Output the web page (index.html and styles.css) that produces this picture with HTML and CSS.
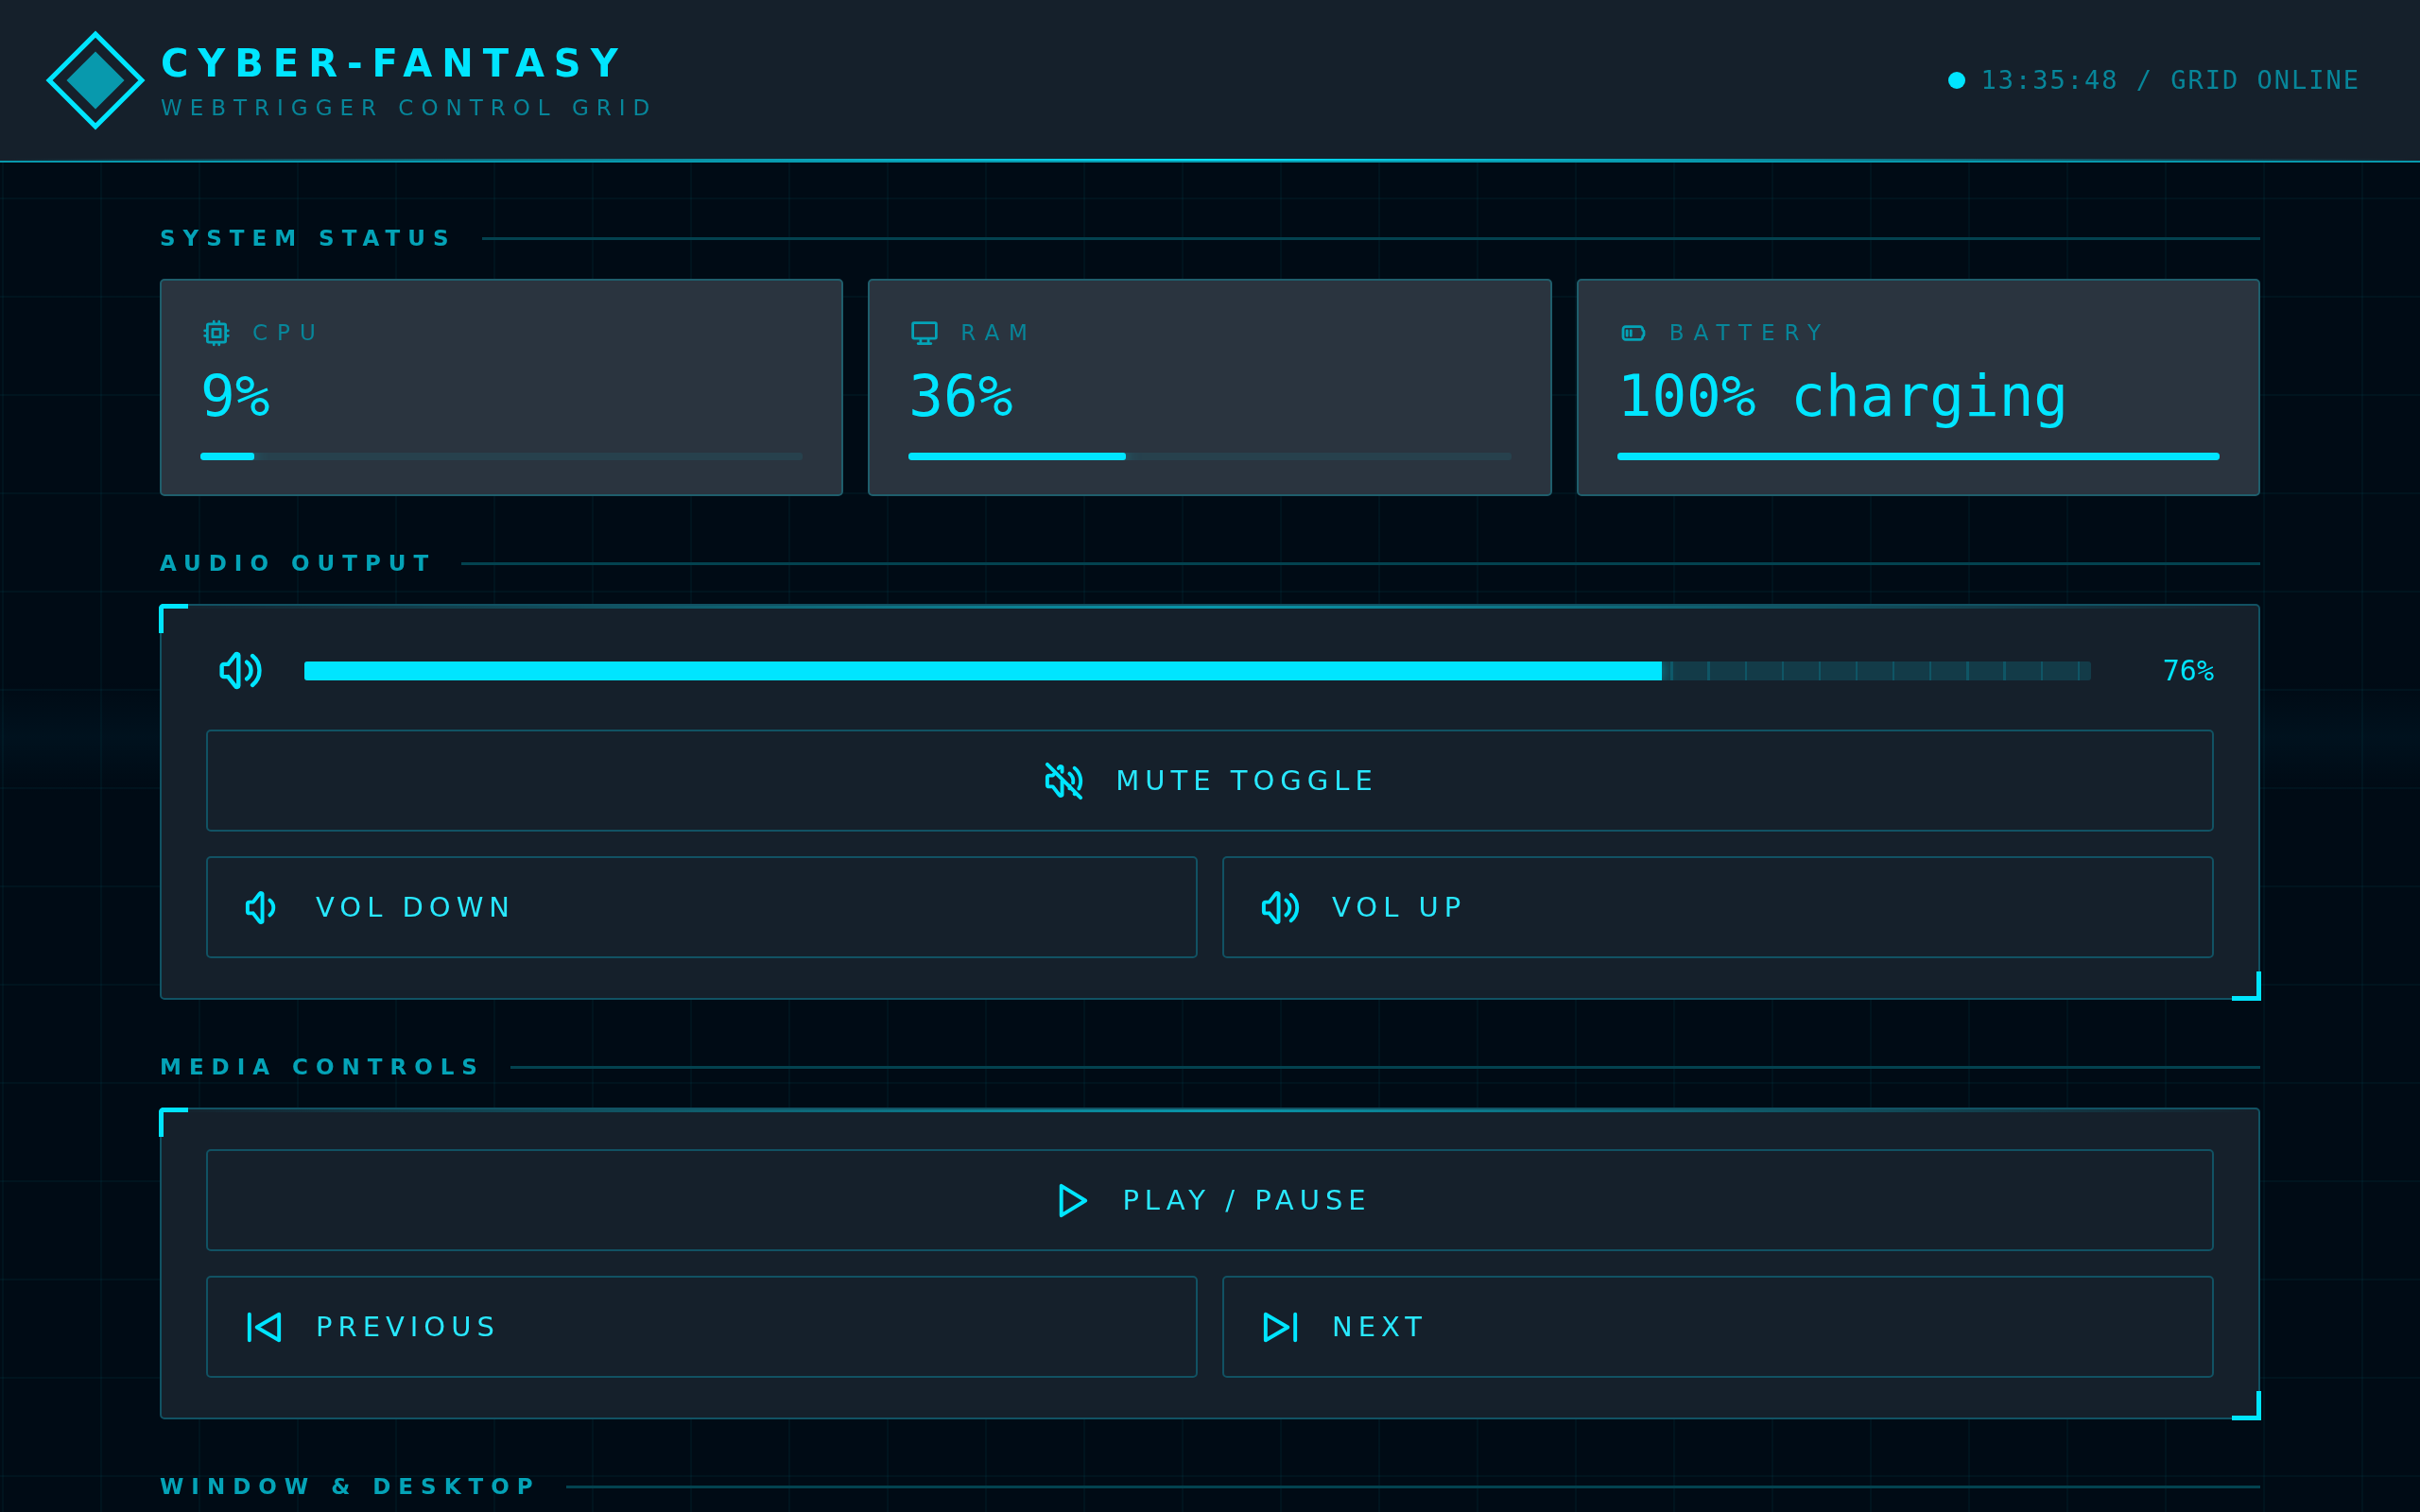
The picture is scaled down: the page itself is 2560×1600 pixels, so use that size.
FILE: index.html
```html
<!DOCTYPE html>
<html lang="en">
<head>
<meta charset="utf-8">
<meta name="viewport" content="width=device-width, initial-scale=1">
<title>Cyber-Fantasy</title>
<link rel="stylesheet" href="styles.css">
</head>
<body>
<div class="scan" aria-hidden="true"></div>
<header class="top">
  <div class="brand">
    <svg class="logo" viewBox="0 0 104 104" aria-hidden="true"><path d="M52 4 100 52 52 100 4 52z" fill="none" stroke="#00e5ff" stroke-width="5"/><path d="M52 22 82 52 52 82 22 52z" fill="#0899ad"/></svg>
    <div class="names">
      <h1 class="title">CYBER-FANTASY</h1>
      <p class="subtitle">WEBTRIGGER CONTROL GRID</p>
    </div>
  </div>
  <div class="status"><span class="dot"></span><span>13:35:48 / GRID ONLINE</span></div>
</header>
<main class="main">
  <section class="section">
    <h2 class="heading">SYSTEM STATUS</h2>
    <div class="cards">
      <article class="card">
        <div class="card-head"><svg class="icon" viewBox="0 0 24 24"><path d="M5 6a1 1 0 0 1 1-1h12a1 1 0 0 1 1 1v12a1 1 0 0 1-1 1H6a1 1 0 0 1-1-1zM9 9h6v6H9zM3 10h2M3 14h2M10 3v2M14 3v2M21 10h-2M21 14h-2M14 21v-2M10 21v-2"/></svg><span>CPU</span></div>
        <div class="value">9%</div>
        <div class="meter"><div class="fill" style="width:9%"></div></div>
      </article>
      <article class="card">
        <div class="card-head"><svg class="icon" viewBox="0 0 24 24"><path d="M3 5a1 1 0 0 1 1-1h16a1 1 0 0 1 1 1v10a1 1 0 0 1-1 1H4a1 1 0 0 1-1-1zM7 20h10M9 16v4M15 16v4"/></svg><span>RAM</span></div>
        <div class="value">36%</div>
        <div class="meter"><div class="fill" style="width:36%"></div></div>
      </article>
      <article class="card">
        <div class="card-head"><svg class="icon" viewBox="0 0 24 24"><path d="M6 7h11a2 2 0 0 1 2 2v.5a.5.5 0 0 0 .5.5.5.5 0 0 1 .5.5v3a.5.5 0 0 1-.5.5.5.5 0 0 0-.5.5v.5a2 2 0 0 1-2 2H6a2 2 0 0 1-2-2V9a2 2 0 0 1 2-2M7 10v4M10 10v4"/></svg><span>BATTERY</span></div>
        <div class="value">100% charging</div>
        <div class="meter"><div class="fill" style="width:100%"></div></div>
      </article>
    </div>
  </section>
  <section class="section">
    <h2 class="heading">AUDIO OUTPUT</h2>
    <div class="panel">
      <div class="volume">
        <svg class="icon" viewBox="0 0 24 24"><path d="M15 8a5 5 0 0 1 0 8M17.700 5a9 9 0 0 1 0 14M6 15H4a1 1 0 0 1-1-1v-4a1 1 0 0 1 1-1h2l3.500-4.500A.8.8 0 0 1 11 5v14a.8.8 0 0 1-1.500.5L6 15"/></svg>
        <div class="level"><div class="fill" style="width:76%"></div></div>
        <span class="percent">76%</span>
      </div>
      <div class="buttons">
        <button class="btn wide" type="button"><svg class="icon" viewBox="0 0 24 24"><path d="M15 8a5 5 0 0 1 1.912 4.934M15.130 14.700A5 5 0 0 1 15 16M17.700 5a9 9 0 0 1 2.362 11.086M18.400 18.340A9 9 0 0 1 17.700 19M9.069 5.054 9.500 4.500A.8.8 0 0 1 11 5v2M11 11v8a.8.8 0 0 1-1.500.5L6 15H4a1 1 0 0 1-1-1v-4a1 1 0 0 1 1-1h2l1.294-1.664M3 3l18 18"/></svg><span>MUTE TOGGLE</span></button>
        <button class="btn" type="button"><svg class="icon" viewBox="0 0 24 24"><path d="M15 8a5 5 0 0 1 0 8M6 15H4a1 1 0 0 1-1-1v-4a1 1 0 0 1 1-1h2l3.500-4.500A.8.8 0 0 1 11 5v14a.8.8 0 0 1-1.500.5L6 15"/></svg><span>VOL DOWN</span></button>
        <button class="btn" type="button"><svg class="icon" viewBox="0 0 24 24"><path d="M15 8a5 5 0 0 1 0 8M17.700 5a9 9 0 0 1 0 14M6 15H4a1 1 0 0 1-1-1v-4a1 1 0 0 1 1-1h2l3.500-4.500A.8.8 0 0 1 11 5v14a.8.8 0 0 1-1.500.5L6 15"/></svg><span>VOL UP</span></button>
      </div>
    </div>
  </section>
  <section class="section">
    <h2 class="heading">MEDIA CONTROLS</h2>
    <div class="panel">
      <div class="buttons">
        <button class="btn wide" type="button"><svg class="icon" viewBox="0 0 24 24"><path d="M7 4v16l13-8z"/></svg><span>PLAY / PAUSE</span></button>
        <button class="btn" type="button"><svg class="icon" viewBox="0 0 24 24"><path d="M20 5v14L8 12zM4 5v14"/></svg><span>PREVIOUS</span></button>
        <button class="btn" type="button"><svg class="icon" viewBox="0 0 24 24"><path d="M4 5v14l12-7zM20 5v14"/></svg><span>NEXT</span></button>
      </div>
    </div>
  </section>
  <section class="section">
    <h2 class="heading">WINDOW &amp; DESKTOP</h2>
  </section>
</main>
</body>
</html>
```
FILE: styles.css
```css
:root {
  --cyan: #00e5ff;
  --edge: #115263;
  --panel: #15202b;
  --display: "DejaVu Sans", sans-serif;
  --mono: "DejaVu Sans Mono", monospace;
}
*, *::before, *::after { box-sizing: border-box; }
html { scrollbar-width: none; }
body {
  margin: 0;
  color: var(--cyan);
  font-family: var(--display);
  background-color: #000b15;
  background-image:
    linear-gradient(rgba(0, 229, 255, .04) 2px, transparent 2px),
    linear-gradient(90deg, rgba(0, 229, 255, .04) 2px, transparent 2px);
  background-size: 104px 104px;
  background-position: 2px 1px;
}
h1, h2, p { margin: 0; }

.scan {
  position: fixed;
  z-index: -1;
  top: 45%;
  left: 0;
  right: 0;
  height: 120px;
  background: linear-gradient(transparent, rgba(0, 190, 255, .04), transparent);
}

.top {
  position: relative;
  display: flex;
  align-items: center;
  justify-content: space-between;
  padding: 32px 63px 32px 48px;
  background: var(--panel);
  border-bottom: 2px solid #0899ad;
}
.top::after {
  content: "";
  position: absolute;
  left: 0;
  right: 0;
  bottom: 0;
  height: 2px;
  background: linear-gradient(90deg, transparent, var(--cyan), transparent);
}
.brand { display: flex; align-items: center; gap: 16px; }
.logo { width: 106px; height: 106px; }
.names { padding-top: 12px; }
.title { font-size: 40px; line-height: 47px; letter-spacing: 10px; }
.subtitle {
  font-size: 23px;
  line-height: 47px;
  letter-spacing: 8px;
  color: #07869a;
}
.status {
  display: flex;
  align-items: center;
  gap: 16px;
  font: 27px/32px var(--mono);
  letter-spacing: 2px;
  color: #07869a;
}
.dot { width: 18px; height: 18px; border-radius: 50%; background: var(--cyan); }

.main { max-width: 2334px; margin: 0 auto; padding: 65px 56px 56px; }
.section { margin-bottom: 56px; }
.heading {
  display: flex;
  align-items: center;
  gap: 27px;
  margin-bottom: 28px;
  font-size: 23px;
  line-height: 30px;
  letter-spacing: 8px;
  color: #04a3b7;
}
.heading::after { content: ""; flex: 1; height: 3px; background: #03424f; }

.cards { display: grid; grid-template-columns: repeat(3, 1fr); gap: 26px; }
.card {
  padding: 39px 41px 36px;
  background: #2a343f;
  border: 2px solid #1f5e6c;
  border-radius: 5px;
}
.card-head {
  display: flex;
  align-items: center;
  gap: 21px;
  font-size: 23px;
  line-height: 33px;
  letter-spacing: 10px;
  color: #07869a;
}
.icon {
  flex: none;
  fill: none;
  stroke: var(--cyan);
  stroke-width: 2;
  stroke-linecap: round;
  stroke-linejoin: round;
}
.card-head .icon { width: 34px; height: 33px; stroke: #04a3b7; }
.value { margin: 14px 0 24px; font: 61px/72px var(--mono); }
.meter { height: 8px; border-radius: 3px; background: #27414d; overflow: hidden; }
.fill { height: 100%; background: var(--cyan); box-shadow: 0 0 16px rgba(0, 229, 255, .5); }
.meter .fill { border-radius: 3px; }

.panel {
  position: relative;
  padding: 42px 47px;
  background: var(--panel);
  border: 2px solid var(--edge);
  border-radius: 5px;
  background-image: linear-gradient(90deg, transparent, rgba(0, 229, 255, .6), transparent);
  background-size: 100% 3px;
  background-repeat: no-repeat;
}
.panel::before,
.panel::after {
  content: "";
  position: absolute;
  width: 31px;
  height: 31px;
  border: 0 solid var(--cyan);
}
.panel::before { top: -2px; left: -3px; border-width: 5px 0 0 5px; border-top-left-radius: 5px; }
.panel::after { right: -3px; bottom: -3px; border-width: 0 5px 5px 0; }

.volume { display: flex; align-items: center; gap: 31px; margin-bottom: 36px; }
.volume .icon { width: 73px; height: 53px; }
.level {
  flex: 1;
  height: 20px;
  border-radius: 3px;
  overflow: hidden;
  background:
    repeating-linear-gradient(90deg, transparent 0 1.95%, #0f5565 1.95% 2.07%),
    #133b48;
}
.percent { width: 99px; text-align: right; font: 30px/40px var(--mono); }

.buttons { display: grid; grid-template-columns: 1fr 1fr; gap: 26px; }
.btn {
  display: flex;
  align-items: center;
  gap: 31px;
  height: 108px;
  padding: 0 36px;
  background: transparent;
  border: 2px solid var(--edge);
  border-radius: 5px;
  color: #29e8ff;
  font: 29px/36px var(--display);
  letter-spacing: 6px;
}
.btn.wide { grid-column: 1 / -1; justify-content: center; }
.btn .icon { width: 47px; height: 47px; }
```
